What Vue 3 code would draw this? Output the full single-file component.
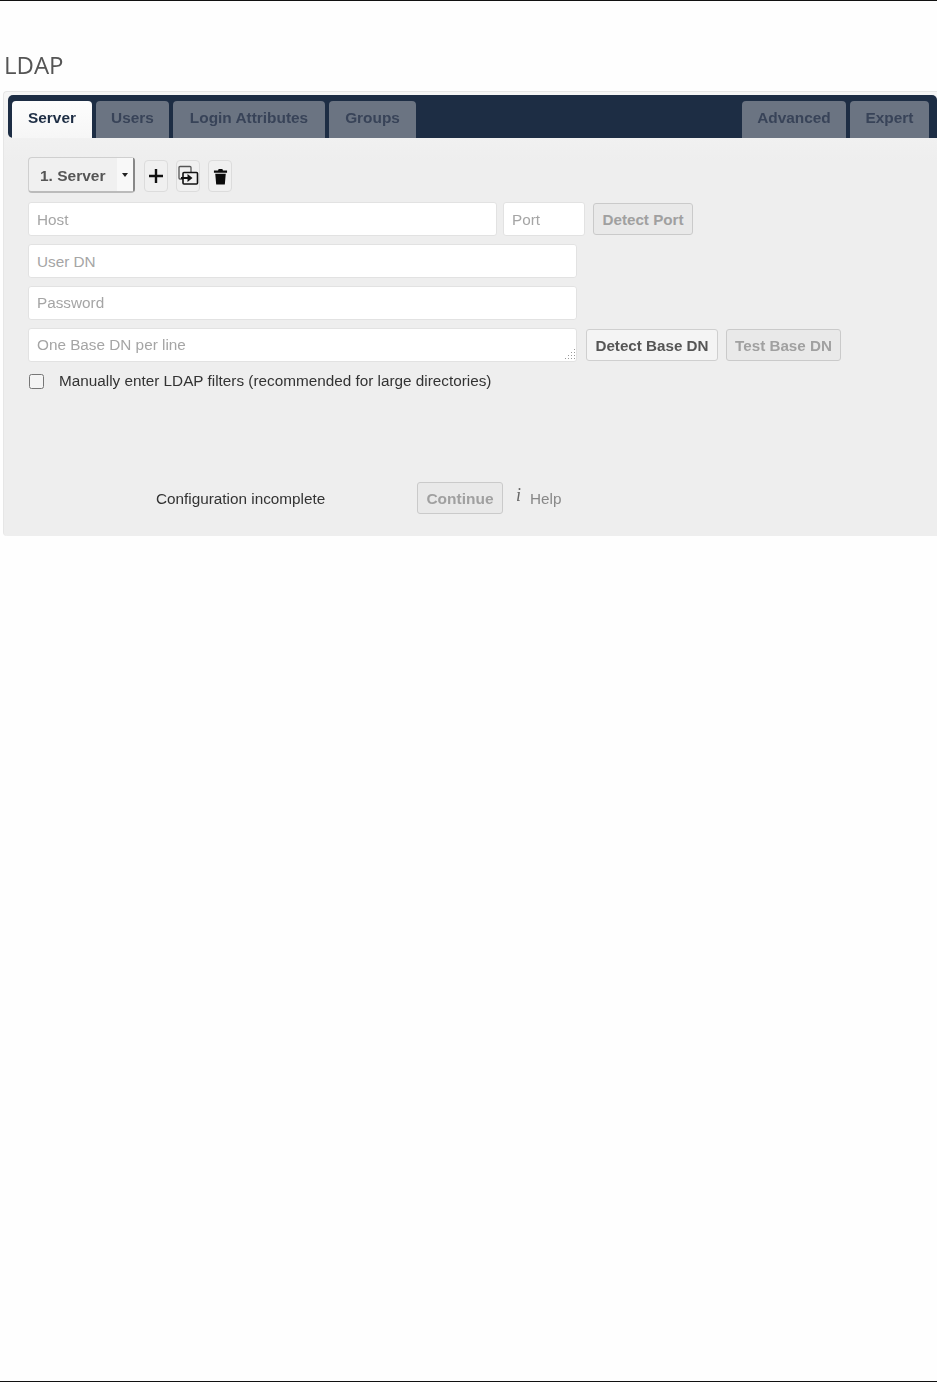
<script setup>
const leftTabs = [
  { label: 'Server', active: true, width: 80 },
  { label: 'Users', width: 73 },
  { label: 'Login Attributes', width: 152 },
  { label: 'Groups', width: 87 },
]
const rightTabs = [
  { label: 'Advanced', width: 104 },
  { label: 'Expert', width: 79 },
]
</script>

<template>
  <div class="page">
    <h2 class="title">LDAP</h2>
    <section class="panel">
      <nav class="tabbar">
        <div class="tabgroup">
          <div v-for="t in leftTabs" :key="t.label" class="tab" :class="{ active: t.active }" :style="{ width: t.width + 'px' }">{{ t.label }}</div>
        </div>
        <div class="tabgroup">
          <div v-for="t in rightTabs" :key="t.label" class="tab" :style="{ width: t.width + 'px' }">{{ t.label }}</div>
        </div>
      </nav>
      <div class="body">
        <div class="toolbar">
          <div class="select">
            <span class="select-label">1. Server</span>
            <span class="select-arrow"><i></i></span>
          </div>
          <button class="icon-btn" aria-label="Add">
            <svg width="16" height="16" viewBox="0 0 16 16"><path d="M8 1v14M1 8h14" stroke="#111" stroke-width="2.4" fill="none"/></svg>
          </button>
          <button class="icon-btn" aria-label="Copy">
            <svg width="22" height="24" viewBox="0 0 22 24" fill="none">
              <path d="M6 15H3a1 1 0 0 1-1-1V3.500a1 1 0 0 1 1-1h10a1 1 0 0 1 1 1V8" stroke="#555" stroke-width="1.3"/>
              <rect x="6" y="8.500" width="14.500" height="11.500" rx="1" stroke="#111" stroke-width="1.600"/>
              <path d="M4 14h8" stroke="#111" stroke-width="2"/>
              <path d="M10.500 10l5 4-5 4z" fill="#111"/>
            </svg>
          </button>
          <button class="icon-btn" aria-label="Delete">
            <svg width="15" height="17" viewBox="0 0 16 18"><path d="M6 1h4l.6 1.500H15V5H1V2.500h4.400zM2.400 6h11.200l-1 11.500H3.400z" fill="#0a0a0a"/></svg>
          </button>
        </div>
        <div class="row row-host">
          <input class="field host nudge" placeholder="Host" />
          <input class="field port nudge" placeholder="Port" />
          <button class="btn disabled detect-port">Detect Port</button>
        </div>
        <div class="row row-user"><input class="field wide nudge" placeholder="User DN" /></div>
        <div class="row row-pass"><input class="field wide" placeholder="Password" /></div>
        <div class="row row-base">
          <div class="field wide textarea">
            <span class="ph">One Base DN per line</span>
            <svg class="grip" width="14" height="12" viewBox="0 0 14 12" fill="#999">
              <rect x="12" y="1" width="1" height="1"/><rect x="12" y="4" width="1" height="1"/><rect x="9" y="4" width="1" height="1"/>
              <rect x="12" y="7" width="1" height="1"/><rect x="9" y="7" width="1" height="1"/><rect x="6" y="7" width="1" height="1"/>
              <rect x="12" y="10" width="1" height="1"/><rect x="9" y="10" width="1" height="1"/><rect x="6" y="10" width="1" height="1"/><rect x="3" y="10" width="1" height="1"/>
            </svg>
          </div>
          <button class="btn detect-base">Detect Base DN</button>
          <button class="btn disabled test-base">Test Base DN</button>
        </div>
        <label class="check">
          <span class="box"></span>
          <span>Manually enter LDAP filters (recommended for large directories)</span>
        </label>
        <div class="footer">
          <span class="status">Configuration incomplete</span>
          <button class="btn disabled continue">Continue</button>
          <span class="info">i</span>
          <span class="help">Help</span>
        </div>
      </div>
    </section>
  </div>
</template>

<style>
html, body { margin: 0; background: #fefefe; }
</style>

<style scoped>
.page {
  box-sizing: border-box;
  height: 1382px;
  width: 937px;
  overflow: hidden;
  border-top: 1px solid #111;
  border-bottom: 1px solid #111;
  font-family: "Liberation Sans", Arial, sans-serif;
  color: #333;
  background: #fefefe;
}
.title {
  margin: 0;
  padding: 49px 0 0 4px;
  height: 41px;
  box-sizing: content-box;
  font: 400 24px/30px "Open Sans", sans-serif;
  color: #555;
  filter: blur(0.5px);
}
.panel {
  box-sizing: border-box;
  margin-left: 3px;
  height: 445px;
  padding: 3px 0 0 4px;
  background: linear-gradient(#f6f6f6 0, #eee 70px);
  border: 1px solid #e6e6e6;
  border-width: 1px 0 0 1px;
  border-radius: 4px 0 0 4px;
  filter: blur(0.5px);
}
.tabbar {
  display: flex;
  justify-content: space-between;
  height: 43px;
  box-sizing: border-box;
  padding: 6px 8px 0 4px;
  background: #1d2d44;
  border-radius: 5px 5px 0 5px;
}
.tabgroup { display: flex; gap: 4px; }
.tab {
  height: 37px;
  box-sizing: border-box;
  padding-bottom: 4px;
  display: flex;
  align-items: center;
  justify-content: center;
  background: #6b7482;
  color: #384358;
  font-weight: 700;
  font-size: 15.400px;
  border-radius: 4px 4px 0 0;
}
.tab.active { background: linear-gradient(#fdfdfd, #f6f6f6); color: #1d2d44; }
.body { padding: 0 0 0 20px; }
.toolbar { display: flex; align-items: center; height: 36px; margin-top: 19px; }
.select {
  box-sizing: border-box;
  width: 107px;
  height: 36px;
  display: flex;
  background: #f0f0f0;
  border: 1px solid #cfcfcf;
  border-right: 2px solid #888;
  border-bottom: 2px solid #bbb;
  border-radius: 4px;
  margin-right: 9px;
  font-size: 15.500px;
  font-weight: 700;
  color: #555;
}
.select-label { flex: 1; display: flex; align-items: center; padding: 2px 0 0 11px; }
.select-arrow {
  width: 16px;
  background: #f8f8f8;
  display: flex;
  align-items: center;
  justify-content: center;
}
.select-arrow i {
  width: 0; height: 0;
  border: 3.500px solid transparent;
  border-top: 4px solid #222;
  border-bottom: 0;
}
.icon-btn {
  box-sizing: border-box;
  width: 24px;
  height: 32px;
  margin: 2px 8px 0 0;
  padding: 0;
  display: flex;
  align-items: center;
  justify-content: center;
  background: #f0f0f0;
  border: 1px solid #dcdcdc;
  border-radius: 4px;
}
.row { display: flex; }
.row-host { margin-top: 9px; height: 34px; }
.row-user { margin-top: 8px; height: 34px; }
.row-pass { margin-top: 8px; height: 34px; }
.row-base { margin-top: 8px; height: 34px; }
.field {
  box-sizing: border-box;
  height: 34px;
  padding: 0 8px;
  background: #fff;
  border: 1px solid #e2e2e2;
  border-radius: 3px;
  font: 15.300px "Liberation Sans", Arial, sans-serif;
  outline: none;
}
.nudge { padding-top: 2px; }
.field::placeholder, .ph { color: #a5a5a5; opacity: 1; }
.host { width: 469px; }
.port { width: 82px; margin-left: 6px; }
.wide { width: 549px; }
.textarea { position: relative; display: flex; align-items: center; }
.grip { position: absolute; right: 0; bottom: 1px; }
.btn {
  box-sizing: border-box;
  height: 32px;
  padding: 0;
  background: #f4f4f4;
  border: 1px solid #cfcfcf;
  border-radius: 3px;
  font: 700 15.200px "Liberation Sans", Arial, sans-serif;
  color: #555;
}
.btn.disabled { background: #e9e9e9; color: #a0a0a0; border-color: #cacaca; }
.detect-port { width: 100px; margin: 1px 0 0 8px; }
.detect-base { width: 132px; margin: 1px 0 0 9px; }
.test-base { width: 115px; margin: 1px 0 0 8px; }
.check {
  display: flex;
  align-items: center;
  margin-top: 9px;
  height: 20px;
  padding-left: 1px;
  font-size: 15.300px;
  color: #333;
}
.box {
  box-sizing: border-box;
  width: 15px;
  height: 15px;
  margin-right: 15px;
  background: #f4f4f4;
  border: 1.500px solid #767676;
  border-radius: 2.500px;
}
.footer {
  display: flex;
  align-items: center;
  height: 32px;
  margin-top: 91px;
  padding-left: 128px;
  font-size: 15.300px;
}
.status { width: 261px; color: #333; padding-top: 2px; }
.continue { width: 86px; height: 32px; padding-top: 1px; font-size: 15.500px; }
.info {
  margin-left: 13px;
  width: 14px;
  padding-bottom: 5px;
  font: italic 18px "Liberation Serif", serif;
  color: #666;
}
.help { color: #888; padding-top: 2px; }
</style>
